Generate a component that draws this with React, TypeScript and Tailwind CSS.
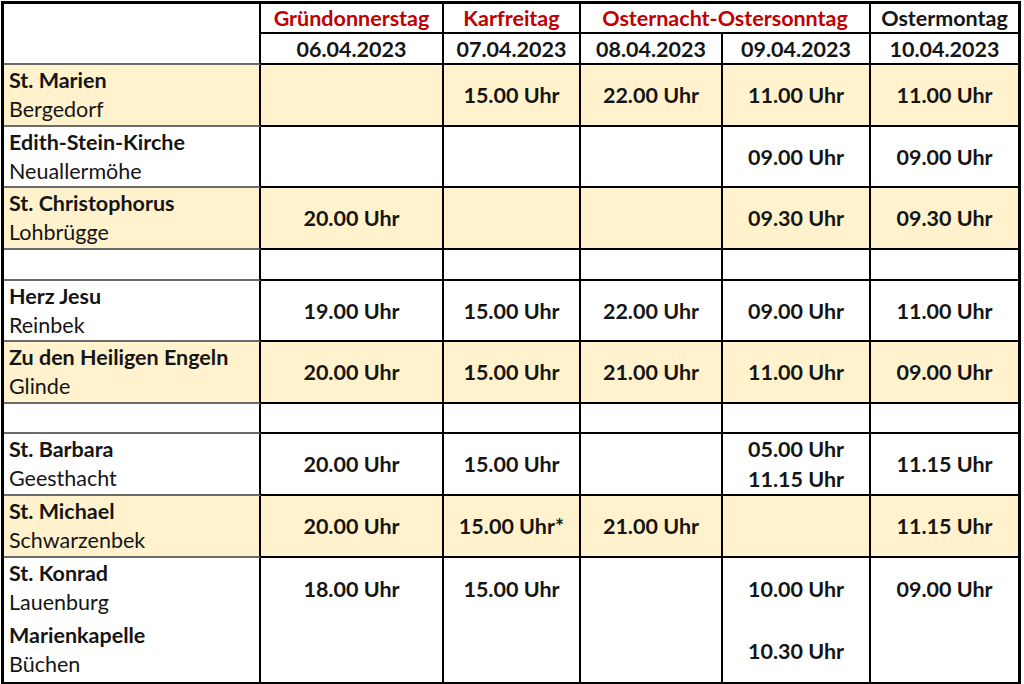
type Row = {
  name: string;
  place: string;
  times: string[][];
  shaded?: boolean;
  h: string;
};

const rows: (Row | { gap: string })[] = [
  { name: "St. Marien", place: "Bergedorf", times: [[], ["15.00 Uhr"], ["22.00 Uhr"], ["11.00 Uhr"], ["11.00 Uhr"]], shaded: true, h: "h-[62px]" },
  { name: "Edith-Stein-Kirche", place: "Neuallermöhe", times: [[], [], [], ["09.00 Uhr"], ["09.00 Uhr"]], h: "h-[61px]" },
  { name: "St. Christophorus", place: "Lohbrügge", times: [["20.00 Uhr"], [], [], ["09.30 Uhr"], ["09.30 Uhr"]], shaded: true, h: "h-[62px]" },
  { gap: "h-[31px]" },
  { name: "Herz Jesu", place: "Reinbek", times: [["19.00 Uhr"], ["15.00 Uhr"], ["22.00 Uhr"], ["09.00 Uhr"], ["11.00 Uhr"]], h: "h-[61px]" },
  { name: "Zu den Heiligen Engeln", place: "Glinde", times: [["20.00 Uhr"], ["15.00 Uhr"], ["21.00 Uhr"], ["11.00 Uhr"], ["09.00 Uhr"]], shaded: true, h: "h-[62px]" },
  { gap: "h-[30px]" },
  { name: "St. Barbara", place: "Geesthacht", times: [["20.00 Uhr"], ["15.00 Uhr"], [], ["05.00 Uhr", "11.15 Uhr"], ["11.15 Uhr"]], h: "h-[62px]" },
  { name: "St. Michael", place: "Schwarzenbek", times: [["20.00 Uhr"], ["15.00 Uhr*"], ["21.00 Uhr"], [], ["11.15 Uhr"]], shaded: true, h: "h-[62px]" },
];

// cell classes, written out so no two border widths fight
function cell(right = true, bottom = true) {
  const r = right ? "border-r-2" : "border-r-0";
  const b = bottom ? "border-b-2" : "border-b-0";
  return `${r} ${b} border-black p-0 align-middle text-center`;
}

function nameCell(bottom = true) {
  const b = bottom ? "border-b-2" : "border-b-0";
  return `border-r-2 ${b} border-r-black border-b-[#6b6b6b] p-0 pl-[5px] text-left align-top`;
}

function Name({ name, place }: { name: string; place: string }) {
  return (
    <>
      <div className="whitespace-nowrap font-bold leading-[30px]">{name}</div>
      <div className="whitespace-nowrap leading-[29px]">{place}</div>
    </>
  );
}

export default function App() {
  return (
    <div className="min-h-[684px] bg-white pl-[1px] pt-[1px]" style={{ fontFamily: "Lato, 'Open Sans', sans-serif" }}>
      <table className="w-[1020px] table-fixed border-separate border-spacing-0 border-[3px] border-black text-[21.5px] leading-[24px] text-[#151515]">
        <colgroup>
          <col className="w-[257px]" />
          <col className="w-[183px]" />
          <col className="w-[137px]" />
          <col className="w-[142px]" />
          <col className="w-[148px]" />
          <col />
        </colgroup>
        <thead>
          <tr className="h-[30px] font-bold">
            <th rowSpan={2} className={nameCell()}></th>
            <th className={`${cell()} text-[#c00000]`}>Gründonnerstag</th>
            <th className={`${cell()} text-[#c00000]`}>Karfreitag</th>
            <th colSpan={2} className={`${cell()} text-[#c00000]`}>Osternacht-Ostersonntag</th>
            <th className={cell(false)}>Ostermontag</th>
          </tr>
          <tr className="h-[31px] font-bold">
            <th className={cell()}>06.04.2023</th>
            <th className={cell()}>07.04.2023</th>
            <th className={cell()}>08.04.2023</th>
            <th className={cell()}>09.04.2023</th>
            <th className={cell(false)}>10.04.2023</th>
          </tr>
        </thead>
        <tbody>
          {rows.map((row, i) =>
            "gap" in row ? (
              <tr key={i} className={row.gap}>
                <td className={nameCell()}></td>
                <td className={cell()}></td>
                <td className={cell()}></td>
                <td className={cell()}></td>
                <td className={cell()}></td>
                <td className={cell(false)}></td>
              </tr>
            ) : (
              <tr key={i} className={`${row.h} ${row.shaded ? "bg-[#fff2cc]" : "bg-white"}`}>
                <td className={nameCell()}>
                  <Name name={row.name} place={row.place} />
                </td>
                {row.times.map((t, j) => (
                  <td key={j} className={`${cell(j !== 4)} font-bold`}>
                    {t.map((line) => (
                      <div key={line} className="leading-[30px]">
                        {line}
                      </div>
                    ))}
                  </td>
                ))}
              </tr>
            )
          )}
          <tr className="h-[62px]">
            <td className={nameCell(false)}>
              <Name name="St. Konrad" place="Lauenburg" />
            </td>
            <td className={`${cell(true, false)} font-bold`}>18.00 Uhr</td>
            <td className={`${cell(true, false)} font-bold`}>15.00 Uhr</td>
            <td className={cell(true, false)}></td>
            <td className={`${cell(true, false)} font-bold`}>10.00 Uhr</td>
            <td className={`${cell(false, false)} font-bold`}>09.00 Uhr</td>
          </tr>
          <tr className="h-[62px]">
            <td className={nameCell(false)}>
              <Name name="Marienkapelle" place="Büchen" />
            </td>
            <td className={cell(true, false)}></td>
            <td className={cell(true, false)}></td>
            <td className={cell(true, false)}></td>
            <td className={`${cell(true, false)} font-bold`}>10.30 Uhr</td>
            <td className={cell(false, false)}></td>
          </tr>
        </tbody>
      </table>
    </div>
  );
}
